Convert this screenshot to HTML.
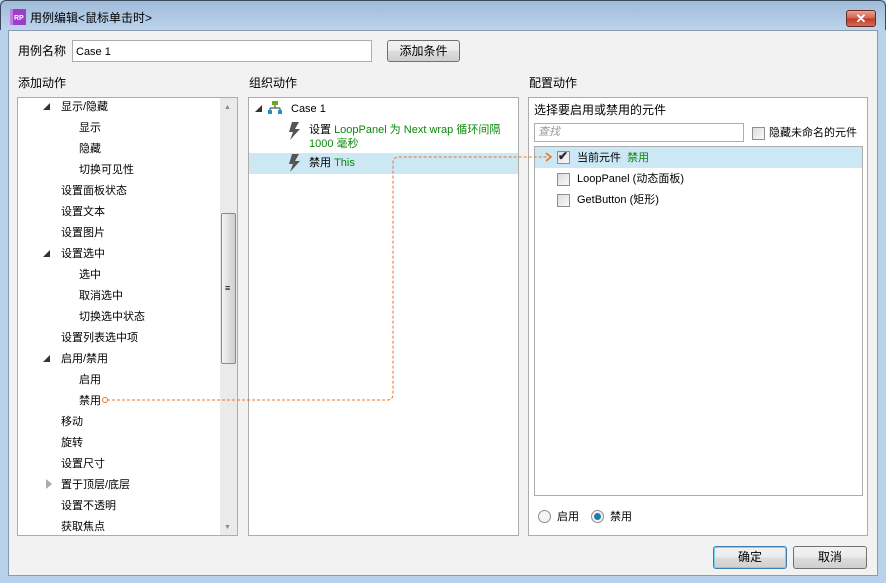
<!DOCTYPE html>
<html><head><meta charset="utf-8"><style>
*{box-sizing:border-box;margin:0;padding:0}
body{width:886px;height:583px;overflow:hidden;background:#b9d1ea;font-family:"Liberation Sans","Noto Sans CJK SC",sans-serif;font-size:11px;color:#000;position:relative}
.a{position:absolute}
.title{left:0;top:0;width:886px;height:30px;background:linear-gradient(#9fbbd9,#bcd4ec);border:1px solid #3a4a5a;border-bottom:none;border-radius:6px 6px 0 0}
.client{left:8px;top:30px;width:870px;height:546px;background:#f2f2f2;border:1px solid #8a9bb0}
.box{background:#fff;border:1px solid #acacac}
.t{position:absolute;white-space:nowrap;line-height:14px}
.btn{position:absolute;border:1px solid #707070;border-radius:3px;background:linear-gradient(#f2f2f2,#ebebeb 50%,#dddddd 51%,#cfcfcf);text-align:center;line-height:20px;font-size:12px}
.cb{position:absolute;width:13px;height:13px;border:1px solid #8e8f8f;background:linear-gradient(135deg,#dcdcdc,#fafafa)}
.tri{position:absolute;width:0;height:0;border-left:7px solid transparent;border-bottom:7px solid #333}
.g{color:#0a8a0a}
</style></head><body>
<div class="a title"></div>
<div class="a" style="left:10px;top:9px;width:16px;height:16px;background:#9b3fc8"></div>
<div class="a" style="left:10px;top:9px;width:3px;height:16px;background:#c37ae6"></div>
<div class="a" style="left:14px;top:15px;font-size:7px;color:#fff;font-weight:bold">RP</div>
<div class="t" style="left:30px;top:11px;font-size:12px">用例编辑&lt;鼠标单击时&gt;</div>
<div class="a" style="left:846px;top:10px;width:30px;height:17px;border:1px solid #6b2a22;border-radius:3px;background:linear-gradient(#e8a293,#d3604c 50%,#c0392b 51%,#d66a55);color:#fff;font-weight:bold;font-size:13px;text-align:center;line-height:15px">✕</div>
<div class="a client"></div>

<div class="t" style="left:18px;top:44px;font-size:12px">用例名称</div>
<div class="a box" style="left:72px;top:40px;width:300px;height:22px;border-color:#abadb3"></div>
<div class="t" style="left:76px;top:45px">Case 1</div>
<div class="btn" style="left:387px;top:40px;width:73px;height:22px">添加条件</div>

<div class="t" style="left:18px;top:76px;font-size:12px">添加动作</div>
<div class="t" style="left:249px;top:76px;font-size:12px">组织动作</div>
<div class="t" style="left:529px;top:76px;font-size:12px">配置动作</div>

<!-- left -->
<div class="a box" style="left:17px;top:97px;width:221px;height:439px"></div>
<div class="a" style="left:220px;top:98px;width:17px;height:437px;background:#eaeaea"></div>
<div class="a" style="left:221px;top:213px;width:15px;height:151px;border:1px solid #8a8a8a;border-radius:2px;background:linear-gradient(90deg,#f4f4f4,#dcdcdc 60%,#cfcfcf)"></div>
<div class="t" style="left:225px;top:281px;font-size:9px">≡</div>
<div class="t" style="left:224px;top:101px;font-size:7px;color:#888">▲</div>
<div class="t" style="left:224px;top:521px;font-size:7px;color:#888">▼</div>
<div class="tri" style="left:43px;top:103px"></div>
<div class="t" style="left:61px;top:100px">显示/隐藏</div>
<div class="t" style="left:79px;top:121px">显示</div>
<div class="t" style="left:79px;top:142px">隐藏</div>
<div class="t" style="left:79px;top:163px">切换可见性</div>
<div class="t" style="left:61px;top:184px">设置面板状态</div>
<div class="t" style="left:61px;top:205px">设置文本</div>
<div class="t" style="left:61px;top:226px">设置图片</div>
<div class="tri" style="left:43px;top:250px"></div>
<div class="t" style="left:61px;top:247px">设置选中</div>
<div class="t" style="left:79px;top:268px">选中</div>
<div class="t" style="left:79px;top:289px">取消选中</div>
<div class="t" style="left:79px;top:310px">切换选中状态</div>
<div class="t" style="left:61px;top:331px">设置列表选中项</div>
<div class="tri" style="left:43px;top:355px"></div>
<div class="t" style="left:61px;top:352px">启用/禁用</div>
<div class="t" style="left:79px;top:373px">启用</div>
<div class="t" style="left:79px;top:394px">禁用</div>
<div class="t" style="left:61px;top:415px">移动</div>
<div class="t" style="left:61px;top:436px">旋转</div>
<div class="t" style="left:61px;top:457px">设置尺寸</div>
<div class="a" style="left:46px;top:479px;width:0;height:0;border-top:5px solid transparent;border-bottom:5px solid transparent;border-left:6px solid #aaa"></div>
<div class="t" style="left:61px;top:478px">置于顶层/底层</div>
<div class="t" style="left:61px;top:499px">设置不透明</div>
<div class="t" style="left:61px;top:520px">获取焦点</div>

<!-- middle -->
<div class="a box" style="left:248px;top:97px;width:271px;height:439px"></div>
<div class="a" style="left:249px;top:153px;width:269px;height:21px;background:#cce8f5"></div>
<div class="tri" style="left:255px;top:105px"></div>
<svg class="a" style="left:268px;top:101px" width="14" height="13"><rect x="4" y="0" width="6" height="4" fill="#6aaa1e"/><path d="M7 4v3M2 7h10M2 7v2M12 7v2" stroke="#333" fill="none"/><rect x="0" y="9" width="4" height="4" fill="#2090d0"/><rect x="10" y="9" width="4" height="4" fill="#2090d0"/></svg>
<div class="t" style="left:291px;top:102px">Case 1</div>
<svg class="a" style="left:288px;top:122px" width="12" height="18"><path d="M4 0h7l-4 7h5l-10 11 3-8h-4z" fill="#555"/></svg>
<div class="t" style="left:309px;top:123px">设置 <span class="g">LoopPanel 为 Next wrap 循环间隔</span></div>
<div class="t g" style="left:309px;top:137px">1000 毫秒</div>
<svg class="a" style="left:288px;top:154px" width="12" height="18"><path d="M4 0h7l-4 7h5l-10 11 3-8h-4z" fill="#555"/></svg>
<div class="t" style="left:309px;top:156px">禁用 <span class="g">This</span></div>

<!-- right -->
<div class="a box" style="left:528px;top:97px;width:340px;height:439px;background:#fff"></div>
<div class="t" style="left:534px;top:103px;font-size:12px">选择要启用或禁用的元件</div>
<div class="a box" style="left:534px;top:123px;width:210px;height:19px;border-color:#abadb3"></div>
<div class="t" style="left:538px;top:125px;color:#999;font-style:italic">查找</div>
<div class="cb" style="left:752px;top:127px"></div>
<div class="t" style="left:769px;top:126px">隐藏未命名的元件</div>
<div class="a box" style="left:534px;top:146px;width:329px;height:350px"></div>
<div class="a" style="left:535px;top:147px;width:327px;height:21px;background:#cce8f5"></div>
<div class="cb" style="left:557px;top:151px"></div>
<div class="t" style="left:558px;top:149px;color:#223;font-weight:bold;font-size:12px">✔</div>
<div class="t" style="left:577px;top:151px">当前元件 <span class="g">&nbsp;禁用</span></div>
<div class="cb" style="left:557px;top:173px"></div>
<div class="t" style="left:577px;top:172px">LoopPanel (动态面板)</div>
<div class="cb" style="left:557px;top:194px"></div>
<div class="t" style="left:577px;top:193px">GetButton (矩形)</div>
<div class="a" style="left:538px;top:510px;width:13px;height:13px;border:1px solid #8e8f8f;border-radius:50%;background:#f4f4f4"></div>
<div class="t" style="left:557px;top:510px">启用</div>
<div class="a" style="left:591px;top:510px;width:13px;height:13px;border:1px solid #8e8f8f;border-radius:50%;background:#f4f4f4"></div>
<div class="a" style="left:594px;top:513px;width:7px;height:7px;border-radius:50%;background:#1e7ab8"></div>
<div class="t" style="left:610px;top:510px">禁用</div>

<div class="btn" style="left:713px;top:546px;width:74px;height:23px;border-color:#3c7fb1;box-shadow:inset 0 0 0 1px #7ed0f0;line-height:21px">确定</div>
<div class="btn" style="left:793px;top:546px;width:74px;height:23px;line-height:21px">取消</div>

<svg class="a" style="left:0;top:0" width="886" height="583"><path d="M107 400H387q6 0 6-6V163q0-6 6-6H548" stroke="#f07020" stroke-dasharray="3,2" fill="none"/><circle cx="105" cy="400" r="2.5" fill="#fff" stroke="#f07020"/><path d="M546 153l5 4-5 4" stroke="#f07020" stroke-width="1.5" fill="none"/></svg>
</body></html>
